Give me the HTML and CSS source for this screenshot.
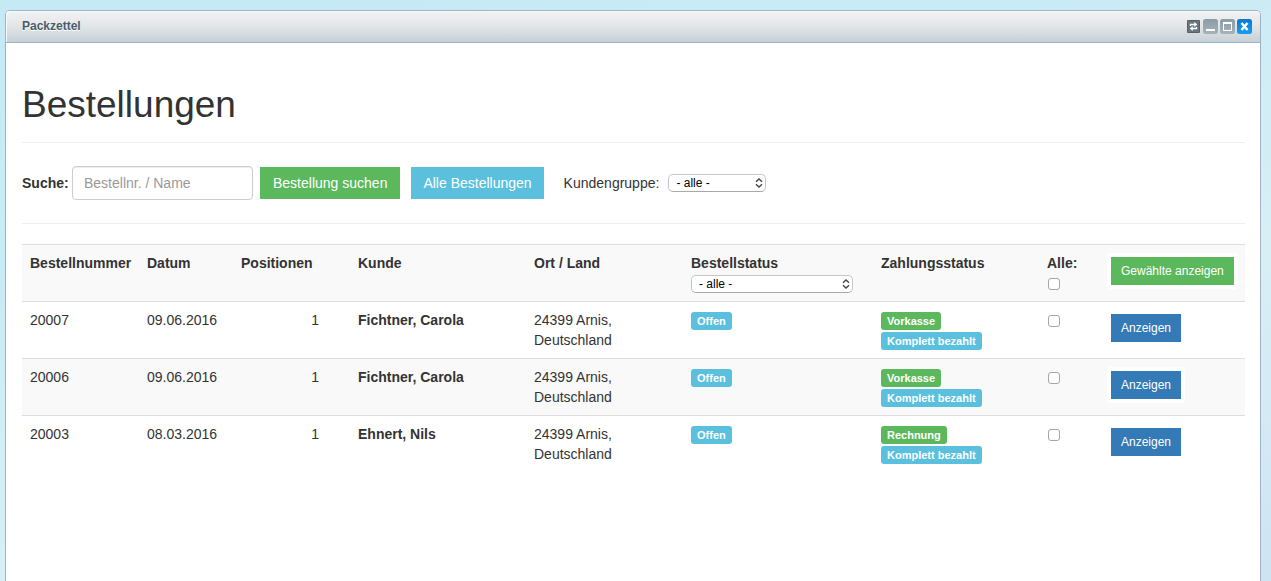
FILE: index.html
```html
<!DOCTYPE html>
<html lang="de">
<head>
<meta charset="utf-8">
<title>Packzettel</title>
<link rel="stylesheet" href="styles.css">
</head>
<body>
<div class="window">
  <header class="titlebar">
    <span class="titlebar-text">Packzettel</span>
    <div class="tools">
      <button class="tool" type="button" aria-label="Neu laden">
        <svg viewBox="0 0 15 15"><rect x="1" y="1" width="13" height="13" rx="1" fill="#687680"/><rect x="1.5" y="1.5" width="12" height="12" rx="1" fill="none" stroke="#50606d"/><path d="M4.500 7V5.500h5M10.500 8v1.500h-5" fill="none" stroke="#fff" stroke-width="1.4"/><path d="M8.300 3l3 2.500-3 2.500zM6.700 7l-3 2.500 3 2.500z" fill="#fff"/></svg>
      </button>
      <button class="tool" type="button" aria-label="Minimieren">
        <svg viewBox="0 0 15 15"><defs><linearGradient id="grey" x2="0" y2="1"><stop stop-color="#8b9ba7"/><stop offset="1" stop-color="#a5b3bb"/></linearGradient></defs><rect width="15" height="15" rx="2.5" fill="url(#grey)"/><path d="M3 10h9v2H3z" fill="#fff"/></svg>
      </button>
      <button class="tool" type="button" aria-label="Maximieren">
        <svg viewBox="0 0 15 15"><rect width="15" height="15" rx="2.5" fill="url(#grey)"/><path d="M3 3h9v9H3zM4 5v6h7V5z" fill="#fff" fill-rule="evenodd"/><path d="M3 3h9v2H3z" fill="#fff"/></svg>
      </button>
      <button class="tool" type="button" aria-label="Schließen">
        <svg viewBox="0 0 15 15"><defs><linearGradient id="blue" x2="0" y2="1"><stop stop-color="#0a77d2"/><stop offset="1" stop-color="#12a0f4"/></linearGradient></defs><rect width="15" height="15" rx="2.5" fill="url(#blue)"/><path d="M4.500 4l6 7M10.500 4l-6 7" fill="none" stroke="#fff" stroke-width="2.5"/></svg>
      </button>
    </div>
  </header>
  <main class="content">
    <h1 class="heading">Bestellungen</h1>
    <form class="search">
      <label class="search-label" for="q">Suche:</label>
      <input class="search-input" id="q" type="text" placeholder="Bestellnr. / Name">
      <button class="btn btn-green btn-search" type="button">Bestellung suchen</button>
      <button class="btn btn-cyan btn-all" type="button">Alle Bestellungen</button>
      <label class="group-label" for="group">Kundengruppe:</label>
      <span class="picker picker-small">
        <select class="picker-select" id="group"><option>- alle -</option></select>
        <svg class="picker-arrow" viewBox="0 0 8 10"><path d="M1 3.800L4 1l3 2.800M1 6.200L4 9l3-2.800"/></svg>
      </span>
    </form>
    <table class="orders">
      <colgroup><col class="c-number"><col class="c-date"><col class="c-count"><col class="c-customer"><col class="c-place"><col class="c-status"><col class="c-payment"><col class="c-check"><col class="c-action"></colgroup>
      <thead>
        <tr>
          <th>Bestellnummer</th>
          <th>Datum</th>
          <th>Positionen</th>
          <th>Kunde</th>
          <th>Ort / Land</th>
          <th><label for="status">Bestellstatus</label>
            <span class="picker">
              <select class="picker-select" id="status"><option>- alle -</option></select>
              <svg class="picker-arrow" viewBox="0 0 8 10"><path d="M1 3.800L4 1l3 2.800M1 6.200L4 9l3-2.800"/></svg>
            </span>
          </th>
          <th>Zahlungsstatus</th>
          <th><label for="all">Alle:</label><input class="check" id="all" type="checkbox"></th>
          <th><button class="btn btn-small btn-green" type="button">Gewählte anzeigen</button></th>
        </tr>
      </thead>
      <tbody>
        <tr>
          <td>20007</td><td>09.06.2016</td><td class="count">1</td><td><b>Fichtner, Carola</b></td><td>24399 Arnis,<br>Deutschland</td>
          <td><div class="badges"><span class="badge badge-cyan">Offen</span></div></td>
          <td><div class="badges"><span class="badge badge-green">Vorkasse</span><span class="badge badge-cyan">Komplett bezahlt</span></div></td>
          <td><input class="check" type="checkbox" aria-label="20007 wählen"></td>
          <td><button class="btn btn-small btn-blue" type="button">Anzeigen</button></td>
        </tr>
        <tr>
          <td>20006</td><td>09.06.2016</td><td class="count">1</td><td><b>Fichtner, Carola</b></td><td>24399 Arnis,<br>Deutschland</td>
          <td><div class="badges"><span class="badge badge-cyan">Offen</span></div></td>
          <td><div class="badges"><span class="badge badge-green">Vorkasse</span><span class="badge badge-cyan">Komplett bezahlt</span></div></td>
          <td><input class="check" type="checkbox" aria-label="20006 wählen"></td>
          <td><button class="btn btn-small btn-blue" type="button">Anzeigen</button></td>
        </tr>
        <tr>
          <td>20003</td><td>08.03.2016</td><td class="count">1</td><td><b>Ehnert, Nils</b></td><td>24399 Arnis,<br>Deutschland</td>
          <td><div class="badges"><span class="badge badge-cyan">Offen</span></div></td>
          <td><div class="badges"><span class="badge badge-green">Rechnung</span><span class="badge badge-cyan">Komplett bezahlt</span></div></td>
          <td><input class="check" type="checkbox" aria-label="20003 wählen"></td>
          <td><button class="btn btn-small btn-blue" type="button">Anzeigen</button></td>
        </tr>
      </tbody>
    </table>
  </main>
</div>
</body>
</html>
```
FILE: styles.css
```css
* { box-sizing: border-box; }

body {
  margin: 0;
  min-height: 100vh;
  padding: 10px 10px 0 5px;
  display: flex;
  flex-direction: column;
  background: linear-gradient(165deg, #c5eaf5 0%, #c9ebf5 30%, #d9eff6 65%, #cfe4f3 100%);
  color: #333;
  font: 14px/20px "Liberation Sans", Arial, sans-serif;
}

button, input, select { font-family: inherit; margin: 0; }

.window {
  flex: 1;
  display: flex;
  flex-direction: column;
  border: 1px solid #a0b4c6;
  border-bottom: 0;
  border-radius: 5px 5px 0 0;
  background: #fff;
}

.titlebar {
  display: flex;
  align-items: center;
  justify-content: space-between;
  height: 32px;
  padding: 0 8px 0 16px;
  border-bottom: 1px solid #9db2c4;
  border-radius: 4px 4px 0 0;
  background: linear-gradient(#f2f2f2, #e2e5e7 50%, #c6d0d6);
  box-shadow: inset 1px 1px 0 #f7f9fa;
}

.titlebar-text {
  padding-bottom: 2px;
  color: #475c6a;
  font-size: 12px;
  font-weight: bold;
  text-shadow: 0 1px 0 #fff;
}

.tools { display: flex; gap: 2px; }

.tool {
  width: 15px;
  height: 15px;
  padding: 0;
  border: 0;
  background: none;
}

.tool svg { display: block; width: 15px; height: 15px; }

.content { padding: 42px 15px 0 16px; }

.heading {
  margin: 0;
  padding-bottom: 17px;
  border-bottom: 1px solid #eee;
  font-size: 37px;
  font-weight: 500;
  line-height: 40px;
}

.search {
  display: flex;
  align-items: center;
  padding: 23px 0;
  border-bottom: 1px solid #eee;
}

.search-label { width: 50px; font-weight: bold; }

.search-input {
  width: 181px;
  height: 34px;
  padding: 0 11px;
  border: 1px solid #ccc;
  border-radius: 4px;
  box-shadow: inset 0 1px 1px rgba(0, 0, 0, 0.075);
  color: #555;
  font-size: 14px;
}

.search-input::placeholder { color: #999; }

.btn {
  height: 32px;
  padding: 0 12px;
  border: 0;
  color: #fff;
  font-size: 14px;
  line-height: 20px;
  white-space: nowrap;
}

.btn-search { margin-left: 7px; padding: 0 13px; }
.btn-all { margin: 0 20px 0 11px; }

.btn-small {
  display: block;
  height: 36px;
  padding: 0 10px;
  border: 4px solid #fff;
  border-radius: 4px;
  background-clip: padding-box;
  font-size: 12px;
}

.btn-green, .badge-green { background-color: #5cb85c; }
.btn-cyan, .badge-cyan { background-color: #5bc0de; }
.btn-blue { background-color: #337ab7; }

.group-label { margin-right: 9px; }

.picker { display: grid; width: 162px; margin-top: 2px; }
.picker-small { width: 98px; margin-top: 0; }

.picker-select {
  grid-area: 1 / 1;
  appearance: none;
  height: 18px;
  padding: 0 20px 0 7px;
  border: 1px solid #c6c6c6;
  border-bottom-color: #a8a8a8;
  border-radius: 5px;
  background: #fff;
  color: #000;
  font-size: 12px;
  line-height: 16px;
}

.picker-arrow {
  grid-area: 1 / 1;
  place-self: center end;
  width: 8px;
  height: 10px;
  margin-right: 3px;
  fill: none;
  stroke: #444;
  stroke-width: 1.4;
  pointer-events: none;
}

.orders {
  width: 100%;
  margin-top: 20px;
  border-collapse: separate;
  border-spacing: 0;
  table-layout: fixed;
}

.c-number { width: 117px; }
.c-date { width: 94px; }
.c-count { width: 117px; }
.c-customer { width: 176px; }
.c-place { width: 157px; }
.c-status { width: 190px; }
.c-payment { width: 166px; }
.c-check { width: 60px; }
.c-action { width: 146px; }

.orders th, .orders td {
  height: 57px;
  padding: 8px;
  border-top: 1px solid #ddd;
  text-align: left;
  vertical-align: top;
}

.orders th label { display: block; }

.orders thead tr, .orders tbody tr:nth-child(even) { background: #f9f9f9; }

.orders .count { padding-right: 31px; text-align: right; }

.badges {
  display: flex;
  flex-direction: column;
  align-items: flex-start;
  gap: 2px;
  padding-top: 2px;
}

.badge {
  padding: 0 6px;
  border-radius: 3px;
  color: #fff;
  font-size: 11px;
  font-weight: bold;
  line-height: 18px;
}

.check {
  appearance: none;
  display: block;
  width: 12px;
  height: 12px;
  margin: 5px 0 0 1px;
  border: 1px solid #a6a6a6;
  border-radius: 3px;
  background: #fff;
}
```
